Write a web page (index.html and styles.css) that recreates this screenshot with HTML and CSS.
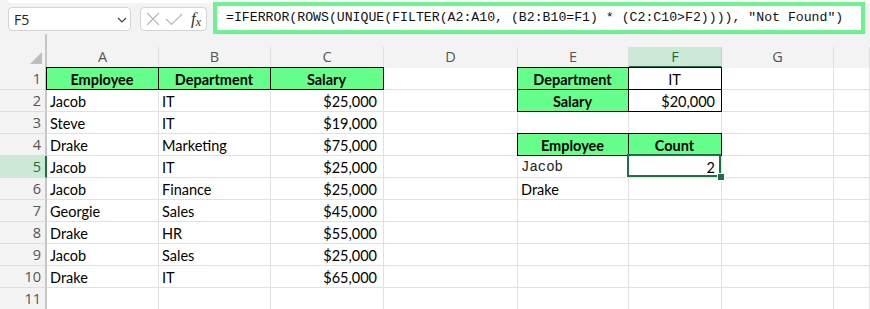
FILE: index.html
```html
<!DOCTYPE html>
<html>
<head>
<meta charset="utf-8">
<link rel="stylesheet" href="styles.css">
</head>
<body>
<div class="bar">
  <div class="namebox"><span>F5</span>
    <svg class="chev" width="10" height="6" viewBox="0 0 10 6"><path d="M1 1 L5 5 L9 1" fill="none" stroke="#444" stroke-width="1.2"/></svg>
  </div>
  <div class="btns">
    <svg width="14" height="14" viewBox="0 0 14 14"><path d="M1 1 L13 13 M13 1 L1 13" stroke="#b8b8b8" stroke-width="1.2" fill="none"/></svg>
    <svg width="18" height="13" viewBox="0 0 18 13"><path d="M1 6 L6.5 11.5 L17 1" stroke="#b8b8b8" stroke-width="1.2" fill="none"/></svg>
    <span class="fx"><i>f</i><sub>x</sub></span>
  </div>
  <div class="formula">=IFERROR(ROWS(UNIQUE(FILTER(A2:A10, (B2:B10=F1) * (C2:C10&gt;F2)))), "Not Found")</div>
</div>
<div class="sheet">
  <div class="corner"></div>
  <div class="ch">A</div><div class="ch">B</div><div class="ch">C</div><div class="ch">D</div><div class="ch">E</div><div class="ch sel">F</div><div class="ch">G</div><div class="ch"></div>

  <div class="rh">1</div>
  <div class="c h b">Employee</div><div class="c h b">Department</div><div class="c h b">Salary</div><div class="c"></div>
  <div class="c h b">Department</div><div class="c b ctr">IT</div><div class="c"></div><div class="c"></div>

  <div class="rh">2</div>
  <div class="c">Jacob</div><div class="c">IT</div><div class="c r">$25,000</div><div class="c"></div>
  <div class="c h b">Salary</div><div class="c b r">$20,000</div><div class="c"></div><div class="c"></div>

  <div class="rh">3</div>
  <div class="c">Steve</div><div class="c">IT</div><div class="c r">$19,000</div><div class="c"></div>
  <div class="c"></div><div class="c"></div><div class="c"></div><div class="c"></div>

  <div class="rh">4</div>
  <div class="c">Drake</div><div class="c">Marketing</div><div class="c r">$75,000</div><div class="c"></div>
  <div class="c h b">Employee</div><div class="c h b">Count</div><div class="c"></div><div class="c"></div>

  <div class="rh rsel">5</div>
  <div class="c">Jacob</div><div class="c">IT</div><div class="c r">$25,000</div><div class="c"></div>
  <div class="c mono">Jacob</div><div class="c r active">2</div><div class="c"></div><div class="c"></div>

  <div class="rh">6</div>
  <div class="c">Jacob</div><div class="c">Finance</div><div class="c r">$25,000</div><div class="c"></div>
  <div class="c">Drake</div><div class="c"></div><div class="c"></div><div class="c"></div>

  <div class="rh">7</div>
  <div class="c">Georgie</div><div class="c">Sales</div><div class="c r">$45,000</div><div class="c"></div>
  <div class="c"></div><div class="c"></div><div class="c"></div><div class="c"></div>

  <div class="rh">8</div>
  <div class="c">Drake</div><div class="c">HR</div><div class="c r">$55,000</div><div class="c"></div>
  <div class="c"></div><div class="c"></div><div class="c"></div><div class="c"></div>

  <div class="rh">9</div>
  <div class="c">Jacob</div><div class="c">Sales</div><div class="c r">$25,000</div><div class="c"></div>
  <div class="c"></div><div class="c"></div><div class="c"></div><div class="c"></div>

  <div class="rh">10</div>
  <div class="c">Drake</div><div class="c">IT</div><div class="c r">$65,000</div><div class="c"></div>
  <div class="c"></div><div class="c"></div><div class="c"></div><div class="c"></div>

  <div class="rh">11</div>
  <div class="c"></div><div class="c"></div><div class="c"></div><div class="c"></div>
  <div class="c"></div><div class="c"></div><div class="c"></div><div class="c"></div>
</div>
</body>
</html>
```

FILE: styles.css
```css
* { box-sizing: border-box; }
html, body { margin: 0; padding: 0; }
body {
  width: 870px;
  height: 309px;
  overflow: hidden;
  background: #f3f3f3;
  font-family: "Open Sans", "Noto Sans", sans-serif;
}
.bar {
  position: relative;
  height: 34px;
  display: flex;
  align-items: flex-start;
}
.bar::before {
  content: "";
  position: absolute;
  top: 0; left: 8px; right: 0;
  height: 3px;
  background: #fff;
  border-bottom-left-radius: 6px;
}
.namebox {
  margin: 7px 0 0 8px;
  width: 123px;
  height: 24px;
  background: #fff;
  border: 1px solid #d4d4d4;
  border-radius: 4px;
  display: flex;
  align-items: center;
  justify-content: space-between;
  padding: 0 3px 0 5px;
  font-size: 14px;
  color: #222;
}
.chev { margin-top: 2px; }
.btns {
  margin: 7px 0 0 9px;
  width: 67px;
  height: 24px;
  background: #fff;
  border: 1px solid #d4d4d4;
  border-radius: 4px;
  display: flex;
  align-items: center;
  padding-left: 5px;
  gap: 5px;
}
.fx {
  font-family: "Liberation Serif", serif;
  font-size: 17px;
  color: #333;
  line-height: 1;
  margin-left: 3px;
}
.fx sub { font-style: italic; font-size: 12px; vertical-align: -2px; }
.formula {
  position: relative;
  margin: 2px 0 0 6px;
  width: 652px;
  height: 32px;
  background: #fff;
  border: 4px solid #6ef290;
  padding-left: 9px;
  font-family: "Liberation Mono", monospace;
  font-size: 13.2px;
  line-height: 24px;
  color: #111;
  white-space: nowrap;
}
.sheet {
  display: grid;
  grid-template-columns: 47px 112px 112px 113px 134px 111px 93px 112px 1fr;
  grid-template-rows: 34px repeat(11, 22px);
}
.corner {
  position: relative;
  border-right: 2px solid #c6c6c6;
}
.corner::after {
  content: "";
  position: absolute;
  right: 3px;
  bottom: 4px;
  width: 0; height: 0;
  border-left: 12px solid transparent;
  border-bottom: 12px solid #bdbdbd;
}
.ch {
  margin-top: 13px;
  border-right: 1px solid #dedede;
  text-align: center;
  font-size: 14.5px;
  line-height: 20px;
  color: #555;
}
.ch.sel {
  background: #cbe9d6;
  color: #1c6b3c;
  border-bottom: 2px solid #1e7145;
  border-right-color: #b9d9c5;
}
.rh {
  border-right: 2px solid #c6c6c6;
  border-bottom: 1px solid #dedede;
  text-align: right;
  padding-right: 4px;
  font-size: 14.5px;
  line-height: 22px;
  color: #555;
}
.rh.rsel {
  background: #cbe9d6;
  color: #1c6b3c;
  border-right-color: #1e7145;
}
.c {
  position: relative;
  background: #fff;
  border-right: 1px solid #e1e1e1;
  border-bottom: 1px solid #e1e1e1;
  padding: 1px 4px 0 3px;
  font-family: "Lato", sans-serif;
  font-size: 14.5px;
  line-height: 21px;
  color: #000;
  white-space: nowrap;
}
.c.r { text-align: right; padding-right: 6px; }
.c.ctr { text-align: center; }
.c.h {
  background: #66ff8c;
  font-weight: bold;
  text-align: center;
}
.c.b::after {
  content: "";
  position: absolute;
  top: -1px; left: -1px; right: -1px; bottom: -1px;
  border: 1px solid #000;
  pointer-events: none;
}
.c.mono {
  font-family: "Liberation Mono", monospace;
  font-size: 14px;
  color: #222;
}
.c.active::after {
  content: "";
  position: absolute;
  top: -2px; left: -2px; right: 0; bottom: 0;
  border: 2px solid #1e7145;
}
.c.active::before {
  content: "";
  position: absolute;
  right: -3px; bottom: -3px;
  width: 6px; height: 6px;
  background: #1e7145;
  box-shadow: 0 0 0 1px #fff;
  z-index: 2;
}
```
